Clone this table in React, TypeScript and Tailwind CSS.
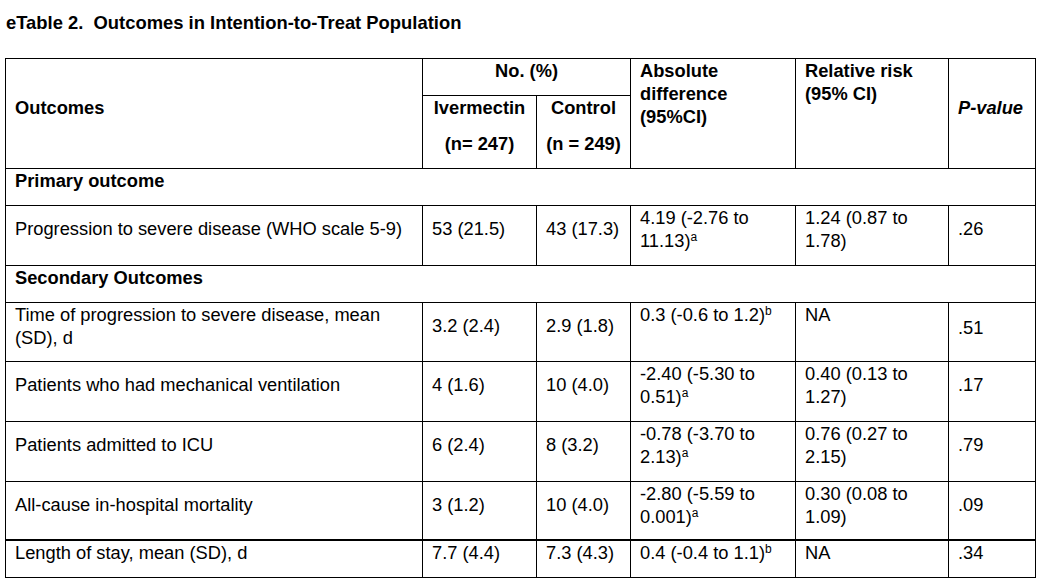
import React from "react";

type Row = {
  h: string;
  label: React.ReactNode;
  lpt: string;
  iv: string;
  ct: string;
  vpt: string;
  abs: React.ReactNode;
  rel: React.ReactNode;
  apt: string;
  p: string;
  ppt: string;
  thick?: boolean;
};

const A = <sup className="text-[12px]">a</sup>;
const B = <sup className="text-[12px]">b</sup>;

const td = "border border-black align-top p-0";

function DataRow({ r }: { r: Row }) {
  const b = r.thick ? " border-t-2" : "";
  return (
    <tr className={r.h}>
      <td className={td + b}>
        <div className={"pl-[9px] " + r.lpt}>{r.label}</div>
      </td>
      <td className={td + b}>
        <div className={"pl-[9px] " + r.vpt}>{r.iv}</div>
      </td>
      <td className={td + b}>
        <div className={"pl-[9px] " + r.vpt}>{r.ct}</div>
      </td>
      <td className={td + b}>
        <div className={"pl-[9px] " + r.apt}>{r.abs}</div>
      </td>
      <td className={td + b}>
        <div className={"pl-[9px] " + r.apt}>{r.rel}</div>
      </td>
      <td className={td + b}>
        <div className={"pl-[9px] " + r.ppt}>{r.p}</div>
      </td>
    </tr>
  );
}

export default function App() {
  return (
    <div className="w-[1045px] h-[581px] bg-white text-black font-['Liberation_Sans',Arial,sans-serif] text-[18.3px] leading-[23px] pl-[5px] pt-[11px]">
      <div className="font-bold text-[18.4px] leading-[24px] pl-px">
        eTable 2.&nbsp; Outcomes in Intention-to-Treat Population
      </div>
      <table className="mt-[23px] border-collapse table-fixed w-[1030px]">
        <colgroup>
          <col className="w-[417px]" />
          <col className="w-[114px]" />
          <col className="w-[94px]" />
          <col className="w-[165px]" />
          <col className="w-[153px]" />
          <col className="w-[87px]" />
        </colgroup>
        <tbody>
          <tr className="h-[37px]">
            <td rowSpan={2} className={td}>
              <div className="pl-[9px] pt-[37px] font-bold">Outcomes</div>
            </td>
            <td colSpan={2} className={td}>
              <div className="text-center font-bold">No. (%)</div>
            </td>
            <td rowSpan={2} className={td}>
              <div className="pl-[9px] font-bold">
                Absolute
                <br />
                difference
                <br />
                (95%CI)
              </div>
            </td>
            <td rowSpan={2} className={td}>
              <div className="pl-[9px] font-bold">
                Relative risk
                <br />
                (95% CI)
              </div>
            </td>
            <td rowSpan={2} className={td}>
              <div className="pt-[37px] pr-[3px] text-center font-bold italic">P-value</div>
            </td>
          </tr>
          <tr className="h-[73px]">
            <td className={td}>
              <div className="text-center font-bold">Ivermectin</div>
              <div className="text-center font-bold mt-[13px]">(n= 247)</div>
            </td>
            <td className={td}>
              <div className="text-center font-bold">Control</div>
              <div className="text-center font-bold mt-[13px]">(n = 249)</div>
            </td>
          </tr>
          <tr className="h-[37px]">
            <td colSpan={6} className={td}>
              <div className="pl-[9px] font-bold">Primary outcome</div>
            </td>
          </tr>
          <DataRow
            r={{
              h: "h-[60px]",
              label: "Progression to severe disease (WHO scale 5-9)",
              lpt: "pt-[11px]",
              iv: "53 (21.5)",
              ct: "43 (17.3)",
              vpt: "pt-[11px]",
              abs: (
                <>
                  4.19 (-2.76 to
                  <br />
                  11.13){A}
                </>
              ),
              rel: (
                <>
                  1.24 (0.87 to
                  <br />
                  1.78)
                </>
              ),
              apt: "pt-0",
              p: ".26",
              ppt: "pt-[11px]",
            }}
          />
          <tr className="h-[37px]">
            <td colSpan={6} className={td}>
              <div className="pl-[9px] font-bold">Secondary Outcomes</div>
            </td>
          </tr>
          <DataRow
            r={{
              h: "h-[59px]",
              label: (
                <>
                  Time of progression to severe disease, mean
                  <br />
                  (SD), d
                </>
              ),
              lpt: "pt-0",
              iv: "3.2 (2.4)",
              ct: "2.9 (1.8)",
              vpt: "pt-[11px]",
              abs: <>0.3 (-0.6 to 1.2){B}</>,
              rel: "NA",
              apt: "pt-0",
              p: ".51",
              ppt: "pt-[13px]",
            }}
          />
          <DataRow
            r={{
              h: "h-[60px]",
              label: "Patients who had mechanical ventilation",
              lpt: "pt-[11px]",
              iv: "4 (1.6)",
              ct: "10 (4.0)",
              vpt: "pt-[11px]",
              abs: (
                <>
                  -2.40 (-5.30 to
                  <br />
                  0.51){A}
                </>
              ),
              rel: (
                <>
                  0.40 (0.13 to
                  <br />
                  1.27)
                </>
              ),
              apt: "pt-0",
              p: ".17",
              ppt: "pt-[11px]",
            }}
          />
          <DataRow
            r={{
              h: "h-[60px]",
              label: "Patients admitted to ICU",
              lpt: "pt-[11px]",
              iv: "6 (2.4)",
              ct: "8 (3.2)",
              vpt: "pt-[11px]",
              abs: (
                <>
                  -0.78 (-3.70 to
                  <br />
                  2.13){A}
                </>
              ),
              rel: (
                <>
                  0.76 (0.27 to
                  <br />
                  2.15)
                </>
              ),
              apt: "pt-0",
              p: ".79",
              ppt: "pt-[11px]",
            }}
          />
          <DataRow
            r={{
              h: "h-[58px]",
              label: "All-cause in-hospital mortality",
              lpt: "pt-[11px]",
              iv: "3 (1.2)",
              ct: "10 (4.0)",
              vpt: "pt-[11px]",
              abs: (
                <>
                  -2.80 (-5.59 to
                  <br />
                  0.001){A}
                </>
              ),
              rel: (
                <>
                  0.30 (0.08 to
                  <br />
                  1.09)
                </>
              ),
              apt: "pt-0",
              p: ".09",
              ppt: "pt-[11px]",
            }}
          />
          <DataRow
            r={{
              h: "h-[38px]",
              label: "Length of stay, mean (SD), d",
              lpt: "pt-0",
              iv: "7.7 (4.4)",
              ct: "7.3 (4.3)",
              vpt: "pt-0",
              abs: <>0.4 (-0.4 to 1.1){B}</>,
              rel: "NA",
              apt: "pt-0",
              p: ".34",
              ppt: "pt-0",
              thick: true,
            }}
          />
        </tbody>
      </table>
    </div>
  );
}
